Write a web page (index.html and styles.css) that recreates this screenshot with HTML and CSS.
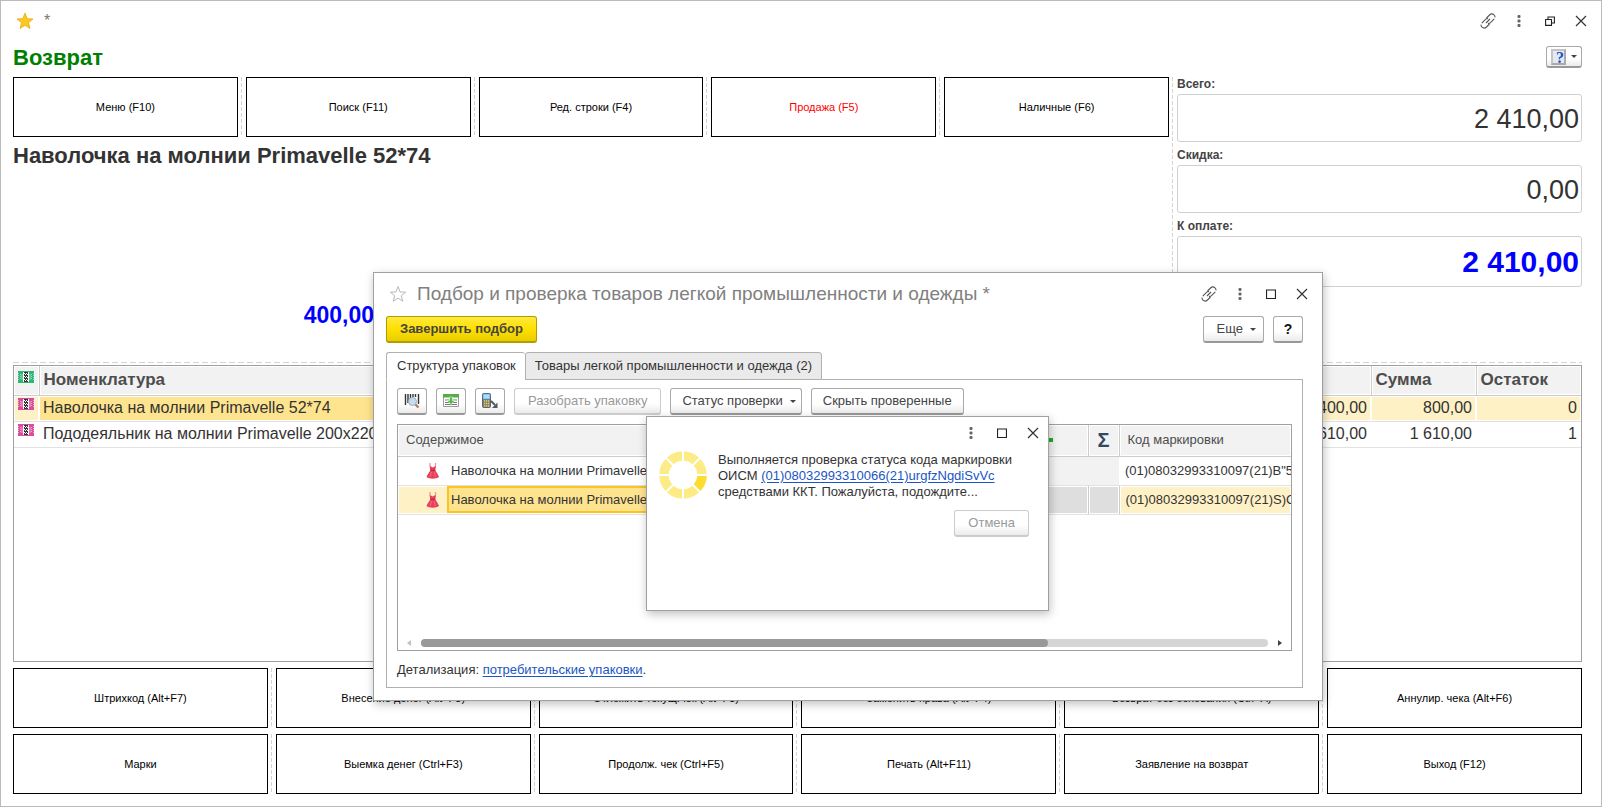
FILE: index.html
```html
<!DOCTYPE html>
<html lang="ru">
<head>
<meta charset="utf-8">
<title>Возврат</title>
<link rel="stylesheet" href="styles.css">
</head>
<body>
<svg class="defs" aria-hidden="true">
  <symbol id="link" viewBox="0 0 16 16"><g fill="none" stroke="#555" stroke-width="1.1"><path d="M6.500 5 9.500 2c1.400-1.400 3.200-1.400 4.500-.200s1.300 3.100 0 4.400L10.500 9.700C9.700 10.400 8.800 10.600 8 10.400" stroke-dasharray="12 1.500"/><path d="M9.500 11 6.500 14c-1.400 1.400-3.200 1.400-4.500.200s-1.300-3.100 0-4.400L5.500 6.300C6.300 5.600 7.200 5.400 8 5.600" stroke-dasharray="12 1.500"/><path d="M6 10 10 6"/></g></symbol>
  <symbol id="dots" viewBox="0 0 4 12"><g fill="#666"><rect x=".5" y="0" width="3" height="3" rx="1"/><rect x=".5" y="4.500" width="3" height="3" rx="1"/><rect x=".5" y="9" width="3" height="3" rx="1"/></g></symbol>
  <symbol id="max" viewBox="0 0 10 10"><path d="M.5 1H9.500V9.500H.5z" fill="none" stroke="#222" stroke-width="1.200"/></symbol>
  <symbol id="close" viewBox="0 0 12 12"><path d="M1 1 11 11M11 1 1 11" fill="none" stroke="#333" stroke-width="1.200"/></symbol>
  <symbol id="dress" viewBox="0 0 14 16"><path d="M4 0V3M9.500 0V3" stroke="#f2949d" stroke-width="1.300"/><path d="M3.500 3 5 3.500 6.800 4.500 8.500 3.500 10 3 9.300 7.500C10.500 9.500 12.500 12 13 14 10 16.300 3.500 16.300.5 14 1 12 3.200 9.500 4.300 7.500z" fill="#e8405a"/><path d="M4.200 7.200H9.400" stroke="#b32440"/><path d="M5.500 9 4 14M8 9 9.500 14" stroke="#f5788a" stroke-width=".8"/></symbol>
  <symbol id="note" viewBox="0 0 16 12"><path d="M0 0H16V12H0z" fill="currentColor"/><path d="M.5 2V10M15.500 2V10M2.500 3V9M13.500 3V9" stroke="#fff" stroke-opacity=".5" stroke-dasharray="1 1"/><path d="M3 3H5V9H3zM11 3H13V9H11z" fill="#fff" fill-opacity=".25"/><path d="M5 1H11V11H5z" fill="#fff"/><path d="M6 1H10V11H6z" fill="#333"/><path d="M6.500 2V11M8.500 2V11" stroke="#fff" stroke-dasharray="1 2"/><path d="M7.500 3V11M9.500 3V11" stroke="#fff" stroke-dasharray="1 2"/></symbol>
</svg>

<main class="shell">
  <header class="titlebar">
    <svg class="star" viewBox="0 0 18 18"><path d="M9 1 11.200 6.600 17 7 12.500 10.800 14 16.500 9 13.300 4 16.500 5.500 10.800 1 7 6.800 6.600z" fill="#fac81e" stroke="#e3ae1a" stroke-width=".8"/></svg>
    <span class="mark">*</span>
    <div class="wincontrols">
      <button aria-label="Ссылка"><svg width="16" height="16"><use href="#link"/></svg></button>
      <button aria-label="Меню"><svg width="4" height="12"><use href="#dots"/></svg></button>
      <button aria-label="Восстановить"><svg width="10" height="10" viewBox="0 0 10 10"><path d="M.6 3.500H6.500V9.400H.6zM3 3.500V1H9.400V7H6.500" fill="none" stroke="#222" stroke-width="1.100"/></svg></button>
      <button aria-label="Закрыть"><svg width="12" height="12"><use href="#close"/></svg></button>
    </div>
  </header>

  <div class="heading">
    <h1>Возврат</h1>
    <button class="btn helpmenu" aria-label="Справка"><span class="key">?</span><i class="caret"></i></button>
  </div>

  <section class="upper">
    <div class="sale">
      <div class="keys">
        <button>Меню (F10)</button><i></i>
        <button>Поиск (F11)</button><i></i>
        <button>Ред. строки (F4)</button><i></i>
        <button class="red">Продажа (F5)</button><i></i>
        <button>Наличные (F6)</button>
      </div>
      <h2>Наволочка на молнии Primavelle 52*74</h2>
      <output class="price">400,00</output>
    </div>
    <i class="vdash"></i>
    <div class="totals">
      <label for="total">Всего:</label><input id="total" value="2 410,00" readonly>
      <label for="discount">Скидка:</label><input id="discount" value="0,00" readonly>
      <label for="topay">К оплате:</label><input id="topay" class="pay" value="2 410,00" readonly>
    </div>
  </section>
  <div class="hdash"></div>

  <div class="goods">
    <table>
      <colgroup><col class="c-icon"><col><col class="c-num"><col class="c-num"><col class="c-left"></colgroup>
      <thead><tr><th><svg class="note green"><use href="#note"/></svg></th><th>Номенклатура</th><th></th><th>Сумма</th><th>Остаток</th></tr></thead>
      <tbody>
        <tr class="current"><td><svg class="note pink"><use href="#note"/></svg></td><td class="active">Наволочка на молнии Primavelle 52*74</td><td class="num">400,00</td><td class="num">800,00</td><td class="num">0</td></tr>
        <tr><td><svg class="note pink"><use href="#note"/></svg></td><td>Пододеяльник на молнии Primavelle 200x220</td><td class="num">1 610,00</td><td class="num">1 610,00</td><td class="num">1</td></tr>
      </tbody>
    </table>
  </div>

  <div class="keys">
    <button>Штрихкод (Alt+F7)</button><i></i>
    <button>Внесение денег (Alt+F8)</button><i></i>
    <button>Отложить текущ.чек (Alt+F3)</button><i></i>
    <button>Заменить права (Alt+F4)</button><i></i>
    <button>Возврат без основания (Ctrl+A)</button><i></i>
    <button>Аннулир. чека (Alt+F6)</button>
  </div>
  <div class="keys">
    <button>Марки</button><i></i>
    <button>Выемка денег (Ctrl+F3)</button><i></i>
    <button>Продолж. чек (Ctrl+F5)</button><i></i>
    <button>Печать (Alt+F11)</button><i></i>
    <button>Заявление на возврат</button><i></i>
    <button>Выход (F12)</button>
  </div>
</main>

<section class="window picker" role="dialog" aria-labelledby="picker-title">
  <header class="picker-title">
    <svg class="star" viewBox="0 0 18 18"><path d="M9 1.500 11 6.900 16.600 7.200 12.300 10.800 13.800 16.200 9 13.100 4.200 16.200 5.700 10.800 1.400 7.200 7 6.900z" fill="#fff" stroke="#b4b9be"/></svg>
    <h2 id="picker-title">Подбор и проверка товаров легкой промышленности и одежды *</h2>
    <div class="wincontrols">
      <button aria-label="Ссылка"><svg width="16" height="16"><use href="#link"/></svg></button>
      <button aria-label="Меню"><svg width="4" height="12"><use href="#dots"/></svg></button>
      <button aria-label="Развернуть"><svg width="10" height="10"><use href="#max"/></svg></button>
      <button aria-label="Закрыть"><svg width="12" height="12"><use href="#close"/></svg></button>
    </div>
  </header>
  <div class="commands">
    <button class="btn primary">Завершить подбор</button>
    <button class="btn more">Еще<i class="caret"></i></button>
    <button class="btn square help">?</button>
  </div>
  <div class="tabs" role="tablist">
    <button role="tab" aria-selected="true">Структура упаковок</button>
    <button role="tab" aria-selected="false">Товары легкой промышленности и одежда (2)</button>
  </div>
  <div class="panel">
    <div class="toolbar">
      <button class="btn square" aria-label="Поиск по штрихкоду"><svg width="18" height="18" viewBox="0 0 18 18"><path d="M2.500 2V13M5 2V11M7.500 2V7M10 2V5M12.500 2V5M15.500 2V12" stroke="#333" stroke-width="1.400"/><circle cx="9.500" cy="9.500" r="4" fill="#c3dcf3" stroke="#a3a9b0"/><path d="M12.500 12.500 15.500 15.500" stroke="#b5795a" stroke-width="2.200"/></svg></button>
      <button class="btn square" aria-label="Загрузить строки"><svg width="18" height="18" viewBox="0 0 18 18"><path d="M1.500 2.500H16.500V14.500H1.500z" fill="#fff" stroke="#999"/><path d="M1 2H17V5.500H1z" fill="#57ad45"/><path d="M3 8H7M3 10.500H7M3 12.500H15M11 8H15M11 10.500H15" stroke="#777"/><path d="M7.500 5H10.500V8.500H13L9 12.500 5 8.500H7.500z" fill="#4fbd43" stroke="#fff" stroke-width=".5"/></svg></button>
      <button class="btn square" aria-label="Загрузить из терминала"><svg width="18" height="18" viewBox="0 0 18 18"><rect x="1.500" y="1.500" width="8" height="14" rx="1" fill="#777d83" stroke="#5d6369"/><path d="M2 2H9V7H2z" fill="#a9ddfa" stroke="#4a8fc4" stroke-width=".6"/><path d="M3 9H8.500M3 11.500H8.500M3 14H8.500" stroke="#f4cf4a" stroke-width="1.300" stroke-dasharray="1.300 .7"/><path d="M10 9 14 13" stroke="#505860" stroke-width="2"/><path d="M16.500 10.500V16H11z" fill="#505860"/></svg></button>
      <button class="btn" disabled>Разобрать упаковку</button>
      <button class="btn">Статус проверки<i class="caret"></i></button>
      <button class="btn">Скрыть проверенные</button>
    </div>
    <div class="packs">
      <table>
        <colgroup><col><col class="c-state"><col class="c-sum"><col class="c-code"></colgroup>
        <thead><tr><th>Содержимое</th><th><i class="plus"></i></th><th class="sigma">Σ</th><th>Код маркировки</th></tr></thead>
        <tbody>
          <tr><td class="item"><svg class="dress"><use href="#dress"/></svg><span>Наволочка на молнии Primavelle</span></td><td class="shade"></td><td class="shade"></td><td class="code">(01)08032993310097(21)B"5</td></tr>
          <tr class="current"><td class="item"><svg class="dress"><use href="#dress"/></svg><span>Наволочка на молнии Primavelle</span></td><td class="shade"></td><td class="shade"></td><td class="code">(01)08032993310097(21)S)C</td></tr>
        </tbody>
      </table>
      <div class="scroll"><i class="arrow left"></i><div class="track"><div class="thumb"></div></div><i class="arrow right"></i></div>
    </div>
    <p class="detail">Детализация: <a href="#">потребительские упаковки</a>.</p>
  </div>
</section>

<section class="window progress" role="dialog" aria-label="Проверка статуса">
  <div class="wincontrols">
    <button aria-label="Меню"><svg width="4" height="12"><use href="#dots"/></svg></button>
    <button aria-label="Развернуть"><svg width="10" height="10"><use href="#max"/></svg></button>
    <button aria-label="Закрыть"><svg width="12" height="12"><use href="#close"/></svg></button>
  </div>
  <div class="message">
    <svg width="48" height="48" viewBox="0 0 48 48"><g fill="none" stroke="#fdec86" stroke-width="9.500"><circle cx="24" cy="24" r="19"/></g><path d="M43 24A19 19 0 0 1 37.400 37.400" fill="none" stroke="#fddd32" stroke-width="9.500"/><path d="M24 0V48M0 24H48M7 7 41 41M41 7 7 41" stroke="#fff" stroke-width="2"/></svg>
    <p>Выполняется проверка статуса кода маркировки<br>ОИСМ <a href="#">(01)08032993310066(21)urgfzNgdiSvVc</a><br>средствами ККТ. Пожалуйста, подождите...</p>
  </div>
  <button class="btn cancel" disabled>Отмена</button>
</section>
</body>
</html>
```

FILE: styles.css
```css
* { box-sizing: border-box; }
body { margin: 0; background: #fff; color: #333; font: 13px/16px "Liberation Sans", Arial, sans-serif; }
button { font: inherit; color: inherit; background: none; border: 0; padding: 0; }
h1, h2, p { margin: 0; }
svg { display: block; }
i { font-style: normal; }
a { color: #1a56c4; text-decoration: underline; text-underline-offset: 2px; }
table { border-collapse: collapse; table-layout: fixed; width: 100%; }
.defs { position: absolute; width: 0; height: 0; }

.shell { min-height: 100vh; display: flex; flex-direction: column; gap: 6px; border: 1px solid #bbb; padding: 0 19px 12px 12px; }
.titlebar { display: flex; align-items: center; height: 40px; margin-bottom: -6px; }
.star { width: 18px; height: 18px; margin-left: 3px; }
.mark { margin-left: 10px; font-size: 16px; color: #777; }
.wincontrols { display: flex; align-items: center; margin-left: auto; }
.wincontrols button { width: 31px; height: 20px; display: flex; align-items: center; justify-content: center; }
.titlebar .wincontrols { margin-right: -14px; }

.heading { display: flex; justify-content: space-between; align-items: flex-start; height: 30px; padding-top: 5px; }
h1 { font-size: 22px; line-height: 24px; color: #008000; }
.btn { height: 27px; border: 1px solid #aaa; border-bottom: 2px solid #999; border-radius: 3px; background: linear-gradient(#fff 60%, #ebebeb); color: #444; padding: 0 13px; display: inline-flex; align-items: center; justify-content: center; white-space: nowrap; }
.btn:disabled { color: #999; border-color: #ccc; }
.toolbar .btn { padding: 0 11px; }
.toolbar .btn:disabled { padding: 0 13px; }
.btn.square, .toolbar .btn.square { width: 30px; padding: 0; }
.caret { border: 3px solid transparent; border-top-color: #444; border-bottom: 0; margin-left: 7px; margin-right: -6px; }
.helpmenu { width: 36px; height: 22px; padding: 0 4px; justify-content: flex-start; }
.helpmenu .caret { margin: 0 0 0 5px; }
.key { width: 16px; height: 16px; border: 2px solid #c4c4c4; border-right-color: #aaa; border-bottom-color: #aaa; background: #e3e9f1; color: #1d4fc4; font: bold 16px/14px "Liberation Serif", serif; text-align: right; }

.upper { display: grid; grid-template-columns: 1fr 0 405px; column-gap: 4px; height: 279px; }
.sale { display: flex; flex-direction: column; }
.keys { display: flex; }
.keys button { flex: 1; height: 60px; border: 1px solid #000; color: #000; font-size: 11px; background: #fff; }
.keys button.red { color: #f00; }
.keys i { width: 1px; margin: 0 4px 0 3px; }
.keys i, .vdash { background: repeating-linear-gradient(#d4d4d4 0 4px, transparent 4px 6px); }
.vdash { width: 1px; margin-left: -1px; }
.sale h2 { font-size: 22px; line-height: 24px; margin-top: 7px; white-space: nowrap; }
.price { margin-top: 135px; width: 376px; text-align: right; font: bold 23px/24px "Liberation Sans", sans-serif; color: #00f; padding-right: 15px; }
.totals { display: flex; flex-direction: column; }
.totals label { font-weight: bold; font-size: 12px; line-height: 14px; color: #444; margin-bottom: 3px; }
.totals input { width: 100%; height: 48px; border: 1px solid #d0d0d0; border-radius: 3px; margin-bottom: 6px; padding: 2px 2px 0; text-align: right; font: 27px "Liberation Sans", sans-serif; color: #333; background: #fff; }
.totals .pay { height: 51px; padding-top: 0; font-size: 30px; font-weight: bold; color: #00f; }
.hdash { height: 1px; margin-bottom: -4px; background: repeating-linear-gradient(90deg, #d4d4d4 0 6px, transparent 6px 9px); }

.goods { flex: 1; border: 1px solid #a0a0a0; font-size: 16px; color: #333; }
.c-icon { width: 25px; }
.c-num { width: 105px; }
.c-left { width: 105px; }
.goods th { height: 29px; padding: 0 4px; text-align: left; font-size: 17px; color: #4d4d4d; background: #f2f2f2; border-right: 1px solid #ccc; border-bottom: 1px solid #ccc; box-shadow: inset 0 0 0 1px #fff; }
.goods th:last-child { border-right: 0; }
.goods td { height: 26px; padding: 0 4px; border-bottom: 1px solid #e2e2e2; white-space: nowrap; }
.goods th:first-child { padding: 0 4px 6px; }
.goods td:first-child { padding: 2px 4px 0; vertical-align: top; }
.num { text-align: right; }
.current td { background: #fff1c6; box-shadow: inset 0 0 0 1px #fff; }
.current td.active { background: #ffe48f; }
.note { width: 16px; height: 12px; }
.green { color: #2fb574; }
.pink { color: #dc4c9c; }

.window { position: absolute; background: #fff; border: 1px solid #a0a0a0; box-shadow: 1px 3px 9px rgba(0, 0, 0, .25); }
.picker { left: 373px; right: 279px; top: 272px; padding: 0 19px 12px 12px; }
.picker-title { display: flex; align-items: center; height: 41px; }
.picker-title h2 { font-size: 19px; line-height: 22px; font-weight: normal; color: #808080; margin-left: 10px; white-space: nowrap; }
.picker-title .wincontrols { margin-right: -14px; }
.commands { display: flex; gap: 9px; margin-top: 2px; }
.commands .more { margin-left: auto; }
.commands .help { font-weight: bold; font-size: 14px; color: #111; }
.commands .primary { background: linear-gradient(#ffe93f, #ffe000 50%, #e8ce00); border-color: #b39b00; font-weight: bold; }
.tabs { display: flex; position: relative; z-index: 1; margin: 9px 0 -1px; }
.tabs button { height: 28px; padding: 0 9px; border: 1px solid #b0b0b0; border-radius: 3px 3px 0 0; background: #eaeaea; color: #333; white-space: nowrap; }
.tabs button[aria-selected=true] { padding-left: 10px; background: #fff; border-right: 0; border-bottom-color: #fff; }
.panel { border: 1px solid #b0b0b0; padding: 8px 10px 9px; }
.toolbar { display: flex; gap: 9px; }
.packs { margin-top: 9px; border: 1px solid #a0a0a0; height: 227px; display: flex; flex-direction: column; overflow: hidden; }
.c-state { width: 70px; }
.c-sum { width: 31px; }
.c-code { width: 172px; }
.packs th { height: 31px; padding: 0 8px; text-align: left; font-weight: normal; color: #4d4d4d; background: #f2f2f2; border-right: 1px solid #ccc; border-bottom: 1px solid #ccc; box-shadow: inset 0 0 0 1px #fff; }
.packs th:last-child { border-right: 0; }
.packs .sigma { font-size: 20px; font-weight: bold; color: #34495e; padding: 0; text-align: center; }
.plus { display: block; width: 12px; height: 4px; margin-left: 14px; background: #1faa2b; }
.packs td { height: 29px; padding: 0; border-bottom: 1px solid #e2e2e2; white-space: nowrap; overflow: hidden; }
.packs .code { padding-left: 6px; }
.packs .shade { background: #f2f2f2; }
.packs .current .shade { background: #dedede; border-right: 1px solid #ccc; }
.item svg { float: left; width: 14px; height: 16px; margin: 6px 7px 0 28px; }
.item span { display: block; overflow: hidden; height: 27px; line-height: 24px; padding-left: 2px; border: 2px solid transparent; }
.current .item span { background: #ffe48f; border-color: #fbc41f; }
.scroll { display: flex; align-items: center; gap: 10px; margin: auto 9px 3px; height: 8px; }
.arrow { border: 3px solid transparent; }
.left { border-left: 0; border-right: 4px solid #c0c0c0; }
.right { border-right: 0; border-left: 4px solid #444; }
.track { flex: 1; height: 8px; border-radius: 4px; background: #d5d5d5; }
.thumb { width: 74%; height: 8px; border-radius: 4px; background: #999; }
.detail { margin-top: 11px; }

.progress { left: 646px; top: 416px; width: 403px; height: 195px; padding-right: 19px; }
.progress .wincontrols { justify-content: flex-end; margin: 6px -19px 0 0; }
.message { display: flex; gap: 11px; margin: 8px 0 0 12px; }
.message p { margin-top: 1px; white-space: nowrap; }
.cancel { display: flex; margin: 10px 0 0 auto; }
```
